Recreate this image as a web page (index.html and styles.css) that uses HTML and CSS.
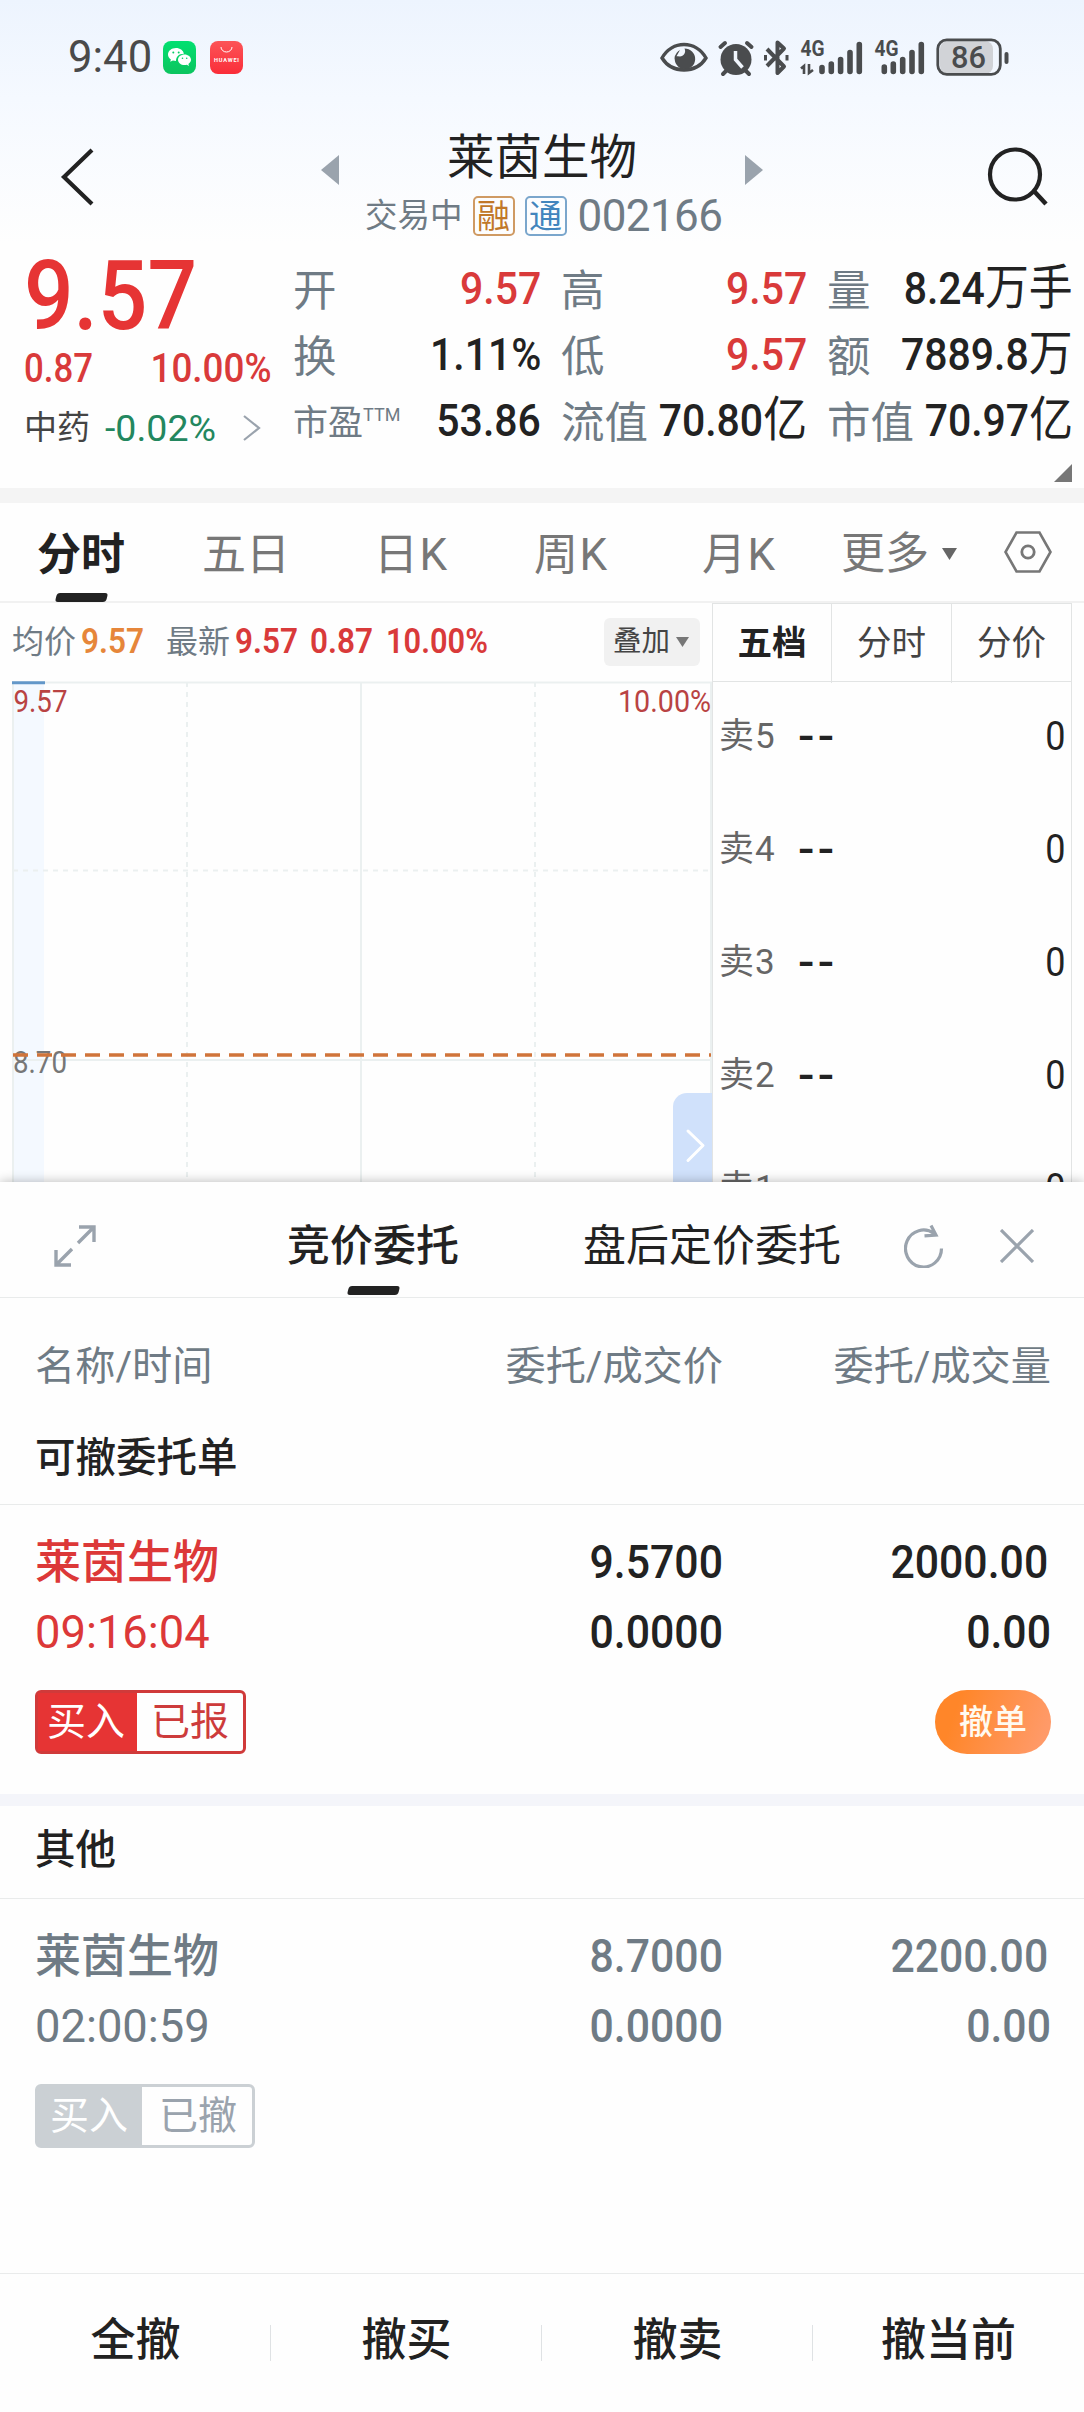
FILE: index.html
```html
<!DOCTYPE html>
<html lang="zh-CN">
<head>
<meta charset="utf-8">
<title>莱茵生物 002166</title>
<link rel="stylesheet" href="styles.css">
</head>
<body>
<main class="quote-page">
  <header class="top">
    <div class="status">
      <span class="clock num">9:40</span>
      <svg class="app" viewBox="0 0 33 33"><defs><linearGradient id="wx" x2="0" y2="1"><stop stop-color="#02e070"/><stop offset="1" stop-color="#0cc45f"/></linearGradient></defs><rect width="33" height="33" rx="8" fill="url(#wx)"/><path d="M13 7c-4.500 0-8 2.900-8 6.500 0 2.100 1.100 3.800 2.900 5l-.7 2.300 2.700-1.300c1 .3 2 .5 3.100.5 0-4.500 3-7.300 7.900-7.300C20.200 9.300 17 7 13 7z" fill="#fff"/><path d="M28 18.700c0-3-2.900-5.300-6.500-5.300s-6.500 2.300-6.500 5.300 2.900 5.300 6.500 5.300c.8 0 1.600-.1 2.300-.3l2.200 1.200-.6-2c1.600-1 2.600-2.500 2.600-4.200z" fill="#fff"/><g fill="#07ce65"><circle cx="10.300" cy="11.500" r="1"/><circle cx="15.700" cy="11.500" r="1"/><circle cx="19.500" cy="17.200" r=".8"/><circle cx="23.700" cy="17.200" r=".8"/></g></svg>
      <svg class="app app-red" viewBox="0 0 33 33"><defs><linearGradient id="hw" x2="0" y2="1"><stop stop-color="#fc5457"/><stop offset="1" stop-color="#fa2d39"/></linearGradient></defs><rect width="33" height="33" rx="8" fill="url(#hw)"/><path d="M11 6a5.500 5 0 0 0 11 0" fill="none" stroke="#fff" stroke-width="1"/><text x="16.500" y="21" font-size="5.600" font-weight="700" fill="#fff" text-anchor="middle" textLength="25">HUAWEI</text></svg>
      <svg class="signals" viewBox="0 0 350 40" fill="none" stroke="#4a4c4e">
        <path d="M2 21C12 3 36 3 46 21C36 37 12 37 2 21z" stroke-width="3.400"/><path d="M20 13a10.200 10.200 0 1 0 12 1.500c-2-2-4.500-3-7.500-3 2 4-1 8-4.500 8-3.500 0-5-1-5-1-.5 2-.5 3-.3 4z" fill="#4a4c4e" stroke="none"/>
        <circle cx="76" cy="22.500" r="15.500" fill="#4a4c4e" stroke="none"/><path d="M60.500 10l4.500-4M91.500 10l-4.500-4M66 34l-3 3M86 34l3 3" stroke-width="4" stroke-linecap="round"/><path d="M75.500 14v8.500l7 8" stroke="#f1f6fd" stroke-width="3.500"/>
        <path d="M107 12l17 17.500-6.500 6.500V5.500l6.500 6-17 17.500" stroke-width="4" stroke-linejoin="round"/><path d="M105.500 18v5.500M127 18v5.500" stroke-width="3"/>
        <path d="M144 37v-8l-3 2.500M149 27v9l4-3" stroke-width="2.600"/>
        <g stroke-width="5.600" stroke-linecap="round"><path d="M162 30.500v4M171.300 27v7.500M180.600 22.500v12M190 15.500v19M199.300 7.500v27M224.300 30v4.500M233.300 27v7.500M242.700 22.500v12M252 15.500v19M261.300 7.500v27"/></g>
        <g class="net" stroke="none" fill="#4a4c4e"><text x="140.500" y="18.500" textLength="24" lengthAdjust="spacingAndGlyphs">4G</text><text x="214.500" y="18.500" textLength="24" lengthAdjust="spacingAndGlyphs">4G</text></g>
        <rect x="280" y="4" width="53" height="33" rx="8" fill="#d1d3d7" stroke="none"/><rect x="277.800" y="2.800" width="62.500" height="34.500" rx="9" stroke-width="2.800"/><path d="M346.500 17v8" stroke-width="4" stroke-linecap="round"/>
        <text class="level" x="291" y="31" textLength="35" lengthAdjust="spacingAndGlyphs" stroke="none" fill="#4a4c4e">86</text>
      </svg>
    </div>
    <nav class="title-bar">
      <svg class="back" viewBox="0 0 36 60"><path d="M32 3L4 30l28 27" fill="none" stroke="#222" stroke-width="4.200"/></svg>
      <svg class="step" viewBox="0 0 18 30"><path d="M18 0v30L0 15z" fill="#9aa3ad"/></svg>
      <div class="stock">
        <h1>莱茵生物</h1>
        <p class="meta"><span>交易中</span><i class="mark margin-mark">融</i><i class="mark connect-mark">通</i><span class="code">002166</span></p>
      </div>
      <svg class="step" viewBox="0 0 18 30"><path d="M0 0v30l18-15z" fill="#9aa3ad"/></svg>
      <svg class="search" viewBox="0 0 64 64"><circle cx="29" cy="28.500" r="25" fill="none" stroke="#222" stroke-width="4.200"/><path d="M47 44l13 14" stroke="#222" stroke-width="4.500"/></svg>
    </nav>
  </header>

  <section class="quote">
    <div class="price">
      <div class="last up"><span class="num">9.57</span></div>
      <div class="change up"><span class="num">0.87</span><span class="num num-end">10.00%</span></div>
      <div class="sector"><span>中药</span><span class="down">-0.02%</span><svg viewBox="0 0 18 26"><path d="M1 1l15 12L1 25" fill="none" stroke="#9aa3ad" stroke-width="2.200"/></svg></div>
    </div>
    <dl class="stats">
      <div><dt>开</dt><dd class="num num-end up">9.57</dd></div>
      <div><dt>高</dt><dd class="num num-end up">9.57</dd></div>
      <div><dt>量</dt><dd class="num num-end">8.24<u>万手</u></dd></div>
      <div><dt>换</dt><dd class="num num-end">1.11%</dd></div>
      <div><dt>低</dt><dd class="num num-end up">9.57</dd></div>
      <div><dt>额</dt><dd class="num num-end">7889.8<u>万</u></dd></div>
      <div><dt class="small">市盈<sup>TTM</sup></dt><dd class="num num-end">53.86</dd></div>
      <div><dt>流值</dt><dd class="num num-end">70.80<u>亿</u></dd></div>
      <div><dt>市值</dt><dd class="num num-end">70.97<u>亿</u></dd></div>
    </dl>
    <svg class="more-corner" viewBox="0 0 18 18"><path d="M18 0v18H0z" fill="#777"/></svg>
  </section>

  <nav class="periods">
    <span class="period active">分时</span><span class="period">五日</span><span class="period">日K</span><span class="period">周K</span><span class="period">月K</span>
    <span class="period more">更多<svg viewBox="0 0 15 12"><path d="M0 0h15L7.500 12z" fill="#666"/></svg></span>
    <svg class="settings" viewBox="0 0 48 42" fill="none" stroke="#777"><path d="M12.500 1.500h23L46.500 21l-11 19.500h-23L1.500 21z" stroke-width="2.600"/><circle cx="24" cy="21" r="6.200" stroke-width="2.800"/></svg>
  </nav>

  <section class="board">
    <div class="chart-pane">
      <div class="legend">
        <span>均价</span><b class="num avg">9.57</b><span>最新</span><b class="num up">9.57</b><b class="num up">0.87</b><b class="num up percent">10.00%</b>
        <button class="overlay">叠加<svg viewBox="0 0 13 10"><path d="M0 0h13L6.500 10z" fill="#777"/></svg></button>
      </div>
      <svg class="chart" viewBox="0 0 701 501">
        <rect x="2" y="2" width="30" height="499" fill="#f4f9ff"/>
        <g stroke="#ebf0f0" stroke-width="2" fill="none"><path d="M0 1.500h701M1 1v500M349 1v500M699 1v500M1 379h698"/><path d="M175 1v500M523 1v500M1 189.500h698" stroke-dasharray="5 5"/></g>
        <path d="M0 1.800h33" stroke="#6297c9" stroke-width="3"/>
        <g class="scale"><text x="1.500" y="31" textLength="54" lengthAdjust="spacingAndGlyphs" fill="#b94343">9.57</text><text x="606" y="31" textLength="93" lengthAdjust="spacingAndGlyphs" fill="#b94343">10.00%</text><text x="1" y="392" textLength="54" lengthAdjust="spacingAndGlyphs" fill="#777">8.70</text></g>
        <path d="M1 374h698" stroke="#d0743a" stroke-width="3.500" stroke-dasharray="15 9"/>
        <path d="M701 412h-26a14 14 0 0 0-14 14v75h40z" fill="#d0e1fb"/><path d="M676 450l15 14.500-15 15" fill="none" stroke="#fff" stroke-width="3" stroke-linecap="round" stroke-linejoin="round"/>
      </svg>
    </div>
    <div class="depth">
      <div class="depth-tabs"><b>五档</b><span>分时</span><span>分价</span></div>
      <ul class="asks">
        <li><span class="level-name">卖5</span><span class="bid">--</span><span class="num num-end qty">0</span></li>
        <li><span class="level-name">卖4</span><span class="bid">--</span><span class="num num-end qty">0</span></li>
        <li><span class="level-name">卖3</span><span class="bid">--</span><span class="num num-end qty">0</span></li>
        <li><span class="level-name">卖2</span><span class="bid">--</span><span class="num num-end qty">0</span></li>
        <li><span class="level-name">卖1</span><span class="bid">--</span><span class="num num-end qty">0</span></li>
      </ul>
    </div>
  </section>
</main>

<section class="sheet">
  <header class="sheet-head">
    <svg class="expand" viewBox="0 0 42 42" fill="none" stroke="#9aa3ad" stroke-width="3.400"><path d="M25 2h15v15M40 2L24 18M2 25v15h15M2 40l16-16"/></svg>
    <span class="sheet-tab active">竞价委托</span>
    <span class="sheet-tab">盘后定价委托</span>
    <svg class="reload" viewBox="0 0 40 44" fill="none" stroke="#9aa3ad" stroke-width="3.200"><path d="M37.500 24.500A18 18.500 0 1 1 30 9.500M27 1.500l5 9.500-11.500.8"/></svg>
    <svg class="close" viewBox="0 0 34 34"><path d="M1 1l32 32M33 1L1 33" stroke="#9aa3ad" stroke-width="3.200"/></svg>
  </header>
  <div class="columns"><span>名称/时间</span><span>委托/成交价</span><span>委托/成交量</span></div>
  <h2 class="group">可撤委托单</h2>
  <article class="order live">
    <strong>莱茵生物</strong><span class="fig">9.5700</span><span class="fig inset">2000.00</span>
    <time>09:16:04</time><span class="fig">0.0000</span><span class="fig">0.00</span>
    <div class="tag"><em>买入</em><span>已报</span></div>
    <button class="cancel">撤单</button>
  </article>
  <h2 class="group other">其他</h2>
  <article class="order done">
    <strong>莱茵生物</strong><span class="fig">8.7000</span><span class="fig inset">2200.00</span>
    <time>02:00:59</time><span class="fig">0.0000</span><span class="fig">0.00</span>
    <div class="tag"><em>买入</em><span>已撤</span></div>
  </article>
  <footer class="actions"><span>全撤</span><span>撤买</span><span>撤卖</span><span>撤当前</span></footer>
</section>
</body>
</html>
```
FILE: styles.css
```css
* { box-sizing: border-box; margin: 0; padding: 0; }
html, body { width: 1084px; height: 2412px; overflow: hidden; }
body { background: #fefefe; color: #222; font-family: Roboto, "Noto Sans CJK SC", sans-serif; }
svg { display: block; flex: none; }
svg text { font-family: Roboto, sans-serif; }
span, b, i, strong, time, h1, h2, p, dt, dd { white-space: nowrap; }
i, em { font-style: normal; }
u { text-decoration: none; font-size: 1.07em; line-height: 1; font-weight: 400; }
button { border: 0; font-family: inherit; }
.num { display: inline-block; transform: scaleX(.9); transform-origin: left; }
.num-end { transform-origin: right; }
.up { color: #d93a3a; }
.down { color: #23875f; }

.quote-page { height: 1182px; overflow: hidden; }
.top { height: 244px; background: linear-gradient(#edf4fe, #f5f9ff 40%, #fefefe); }
.status { display: flex; align-items: center; height: 114px; padding-left: 68px; color: #4a4a4a; }
.clock { width: 95px; font-size: 45px; line-height: 60px; transform: scaleX(.97); }
.app { width: 33px; height: 33px; }
.app-red { margin-left: 14px; }
.signals { width: 350px; height: 40px; margin: -1px 0 0 417px; }
.net { font-size: 22px; font-weight: 700; }
.level { font-size: 32px; font-weight: 500; }
.title-bar { display: flex; height: 130px; padding: 0 34px 0 60px; }
.back { width: 36px; height: 60px; margin: 33px 225px 0 0; }
.step { width: 18px; height: 30px; margin-top: 41px; }
.stock { width: 406px; text-align: center; }
h1 { font-size: 47.500px; font-weight: 400; line-height: 60px; margin-top: 14px; }
.meta { display: flex; align-items: center; height: 42px; margin-top: 7px; padding-left: 26px; color: #6f7b85; font-size: 32.500px; line-height: 42px; }
.mark { width: 42px; height: 40px; border: 2px solid; border-radius: 5px; font-size: 33px; line-height: 37px; margin-left: 10px; }
.margin-mark { color: #c17829; border-color: #cf9a63; }
.connect-mark { color: #4285bd; border-color: #7aa6cc; }
.code { margin-left: 11px; font-size: 44px; letter-spacing: -.6px; line-height: 42px; }
.search { width: 64px; height: 64px; margin: 32px 0 0 223px; }

.quote { display: grid; grid-template-columns: 268px 782px; height: 259px; padding-left: 24px; border-bottom: 15px solid #f4f4f4; }
.price { height: 214px; }
.last { height: 105px; font-size: 97px; font-weight: 500; line-height: 105px; }
.last.up { color: #e63434; }
.change { display: flex; justify-content: space-between; width: 248px; height: 40px; font-size: 40px; font-weight: 500; line-height: 40px; }
.change .num:first-child { transform: scaleX(.87); }
.change .num-end { transform: scaleX(.92); }
.sector { display: flex; align-items: center; height: 78px; font-size: 33px; line-height: 78px; color: #444; }
.sector .down { width: 138px; margin-left: 15px; font-size: 37.500px; }
.sector svg { width: 18px; height: 26px; }
.stats { display: grid; grid-template-columns: 248px 246px 246px; column-gap: 20px; grid-auto-rows: 66px; padding: 12px 0 0 1px; }
.stats div { display: flex; justify-content: space-between; align-items: center; }
.stats .num { transform: scaleX(.91); }
dt { width: 0; margin-top: 5px; font-size: 43.500px; line-height: 66px; color: #6f7b85; }
dt.small { font-size: 35px; }
sup { font-size: 18px; vertical-align: 14px; line-height: 1; }
dd { font-size: 45px; font-weight: 500; line-height: 66px; }
.more-corner { width: 18px; height: 18px; grid-column: 2; justify-self: end; margin-right: 2px; }

.periods { display: flex; align-items: center; height: 100px; padding-left: 37px; border-bottom: 2px solid #f1f1f1; color: #777; font-size: 44px; line-height: 98px; }
.period { width: 165px; height: 98px; padding-top: 3px; }
.period:nth-child(3) { width: 160px; margin-left: 7px; letter-spacing: 1.500px; }
.period:nth-child(4) { width: 168px; letter-spacing: 1.500px; }
.period:nth-child(5) { width: 139px; letter-spacing: 1.500px; }
.period.active { color: #222; font-weight: 700; }
.active::after { content: ""; display: block; width: 51px; height: 9px; border-radius: 3px; background: #222; transform: skewX(-14deg); }
.period.active::after { margin: -11px 0 0 19px; }
.period.more { display: flex; align-items: center; gap: 13px; width: 163px; }
.more svg { width: 15px; height: 12px; }
.settings { width: 48px; height: 42px; }

.board { display: grid; grid-template-columns: 700px 360px; padding-left: 12px; }
.legend { display: flex; align-items: center; height: 78px; font-size: 32px; line-height: 78px; color: #6f7b85; }
.legend b { width: 85px; margin-left: 5px; font-size: 35px; font-weight: 600; }
.legend b.up { width: 70px; }
.legend b.percent { width: 115px; margin-left: 6px; transform: scaleX(.88); }
.legend b.avg { color: #e6863a; }
.overlay { display: flex; align-items: center; gap: 6px; width: 96px; height: 48px; margin-left: auto; margin-right: 12px; padding-left: 9px; border-radius: 6px; background: #f1f1f1; color: #444; font-size: 28.500px; line-height: 48px; flex: none; }
.overlay svg { width: 13px; height: 10px; }
.chart { width: 701px; height: 501px; }
.scale { font-size: 31px; }
.depth { border: solid #e2e4e4; border-width: 1px 1px 0; }
.depth-tabs { display: grid; grid-template-columns: 118px 120px 1fr; height: 78px; border-bottom: 1px solid #e2e4e4; font-size: 34.500px; line-height: 79px; text-align: center; color: #444; }
.depth-tabs b { color: #222; }
.depth-tabs span { border-left: 1px solid #e2e4e4; }
.asks { list-style: none; margin-top: -2px; }
.asks li { display: grid; grid-template-columns: 79px 1fr auto; align-items: center; height: 113px; padding: 0 6px; font-size: 40px; line-height: 113px; color: #666; }
.level-name { font-size: 35px; letter-spacing: 1px; }
.bid { color: #222; font-size: 44px; font-weight: 500; letter-spacing: 3px; transform: scaleX(1.1); transform-origin: left; }
.qty { color: #222; }

.sheet { position: relative; height: 1230px; background: #fefefe; box-shadow: 0 -1px 10px rgba(0,0,0,.24); display: flex; flex-direction: column; }
.sheet-head { display: flex; height: 116px; border-bottom: 1px solid #e9ebeb; padding-left: 54px; font-size: 43px; line-height: 60px; }
.expand { width: 42px; height: 42px; margin: 43px 191px 0 0; }
.sheet-tab { width: 296px; padding-top: 34px; }
.sheet-tab.active { font-weight: 500; }
.sheet-tab.active::after { margin: 10px 0 0 61px; }
.reload { width: 40px; height: 44px; margin: 42px 56px 0 25px; }
.close { width: 34px; height: 34px; margin-top: 47px; }
.columns { display: grid; grid-template-columns: 335px 353px 328px; height: 110px; padding: 15px 0 0 35px; color: #6f7b85; font-size: 40.200px; line-height: 108px; }
.columns span:not(:first-child) { text-align: right; }
.group { height: 97px; padding: 0 35px; border-bottom: 1px solid #e9ebeb; font-size: 40.500px; font-weight: 500; line-height: 101px; }
.group.other { height: 105px; border-top: 12px solid #f4f5fa; line-height: 89px; }
.order { display: grid; grid-template-columns: 335px 353px 328px; grid-template-rows: 70px 70px 64px; padding: 22px 0 0 35px; height: 289px; line-height: 70px; }
.order.done { height: 374px; }
.order strong { font-size: 46px; font-weight: 500; }
.order time { font-size: 46px; font-weight: 400; transform: scaleX(.985); transform-origin: left; }
.fig { font-size: 46px; font-weight: 500; text-align: right; transform: scaleX(.93); transform-origin: right; }
.inset { padding-right: 3px; }
.live strong, .live time { color: #dc3838; }
.done strong, .done time, .done .fig { color: #6f7b85; }
.tag { display: flex; justify-self: start; height: 64px; margin-top: 23px; border: 3px solid; border-radius: 6px; font-size: 39px; line-height: 58px; }
.tag em { width: 101px; padding-left: 9px; color: #fff; }
.tag span { padding: 0 14px; }
.live .tag { width: 211px; border-color: #d03a3a; }
.live .tag em { background: #e63434; }
.live .tag span { color: #cd3b3b; }
.done .tag { width: 220px; border-color: #cbd0d4; }
.done .tag em { width: 104px; padding-left: 12px; background: #cbd0d4; }
.done .tag span { padding-left: 17px; color: #9aa3ad; }
.cancel { grid-column: 3; justify-self: end; width: 116px; height: 64px; margin-top: 23px; border-radius: 32px; background: linear-gradient(110deg, #ff8629 20%, #ff9a68 90%); color: #fffaf0; font-size: 34px; font-weight: 500; line-height: 63px; }
.actions { display: grid; grid-template-columns: repeat(4, 271px); height: 139px; border-top: 1px solid #e9ebeb; font-size: 45px; font-weight: 500; line-height: 134px; text-align: center; align-items: start; }
.actions span { background: linear-gradient(#dfe2e4, #dfe2e4) right 51px / 1px 36px no-repeat; }
.actions span:last-child { background: none; }
```
